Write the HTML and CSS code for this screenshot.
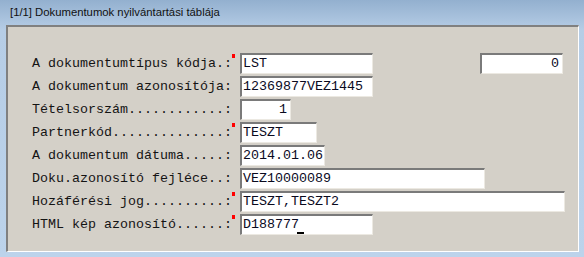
FILE: index.html
```html
<!DOCTYPE html>
<html lang="hu">
<head>
  <meta charset="UTF-8">
  <title>Dokumentumok nyilvántartási táblája</title>
  <link rel="stylesheet" href="styles.css">
</head>
<body>
  <div class="window-title">[1/1] Dokumentumok nyilvántartási táblája</div>
  <div class="panel">
    <div class="row">
      <span class="label">A dokumentumtípus kódja.:</span>
      <span class="mark req"></span>
      <span class="field w-133">LST</span>
      <span class="field w-83 num counter">0</span>
    </div>
    <div class="row">
      <span class="label">A dokumentum azonosítója:</span>
      <span class="mark"></span>
      <span class="field w-133">12369877VEZ1445</span>
    </div>
    <div class="row">
      <span class="label">Tételsorszám............:</span>
      <span class="mark"></span>
      <span class="field w-51 num">1</span>
    </div>
    <div class="row">
      <span class="label">Partnerkód..............:</span>
      <span class="mark req"></span>
      <span class="field w-77">TESZT</span>
    </div>
    <div class="row">
      <span class="label">A dokumentum dátuma.....:</span>
      <span class="mark"></span>
      <span class="field w-85">2014.01.06</span>
    </div>
    <div class="row">
      <span class="label">Doku.azonosító fejléce..:</span>
      <span class="mark"></span>
      <span class="field w-245">VEZ10000089</span>
    </div>
    <div class="row">
      <span class="label">Hozáférési jog..........:</span>
      <span class="mark req"></span>
      <span class="field w-325">TESZT,TESZT2</span>
    </div>
    <div class="row">
      <span class="label">HTML kép azonosító......:</span>
      <span class="mark req"></span>
      <span class="field w-133">D188777<span class="caret"></span></span>
    </div>
  </div>
</body>
</html>
```
FILE: styles.css
```css
html, body {
  margin: 0;
  padding: 0;
}

body {
  width: 584px;
  height: 257px;
  overflow: hidden;
  background: linear-gradient(to bottom, #93b0cf 0, #b6cde6 30px, #bcd3eb 100%);
}

/* ablak címsor */
.window-title {
  height: 25px;
  box-sizing: border-box;
  padding: 5px 0 0 10px;
  font-family: "Liberation Sans", Arial, sans-serif;
  font-size: 11.3px;
  line-height: 15px;
  color: #111;
}

/* szürke űrlap panel */
.panel {
  width: 573px;
  height: 227px;
  margin-left: 6px;
  box-sizing: border-box;
  padding: 26px 0 0 24px;
  background: #d4d0c8;
  border-top: 2px solid #808080;
  border-left: 2px solid #808080;
  border-right: 1px solid #fff;
  border-bottom: 1px solid #fff;
  display: flex;
  flex-direction: column;
  gap: 2px;
}

.row {
  display: flex;
  align-items: flex-start;
  height: 21px;
  font-family: "Liberation Mono", "Courier New", monospace;
  font-size: 13.333px;
}

.label {
  width: 200px;
  line-height: 21px;
  color: #141414;
  white-space: pre;
}

/* kötelező mező jelölő */
.mark {
  width: 8px;
  height: 21px;
  flex: none;
}
.mark.req::before {
  content: '';
  display: block;
  width: 3px;
  height: 4px;
  margin-top: 1px;
  background: #f00;
}

.field {
  height: 21px;
  box-sizing: border-box;
  padding: 0 3px 0 1px;
  background: #fff;
  border-top: 2px solid #7a7a7a;
  border-left: 2px solid #7a7a7a;
  border-right: 1px solid #ece9e2;
  border-bottom: 1px solid #ece9e2;
  line-height: 18px;
  color: #0a0a1e;
  white-space: pre;
  flex: none;
}
.num { text-align: right; }
.counter { margin-left: 107px; }

.w-51 { width: 51px; }
.w-77 { width: 77px; }
.w-83 { width: 83px; }
.w-85 { width: 85px; }
.w-133 { width: 133px; }
.w-245 { width: 245px; }
.w-325 { width: 325px; }

.caret {
  display: inline-block;
  width: 7px;
  height: 16px;
  margin-left: -2px;
  border-bottom: 2px solid #000;
  vertical-align: top;
}
```
